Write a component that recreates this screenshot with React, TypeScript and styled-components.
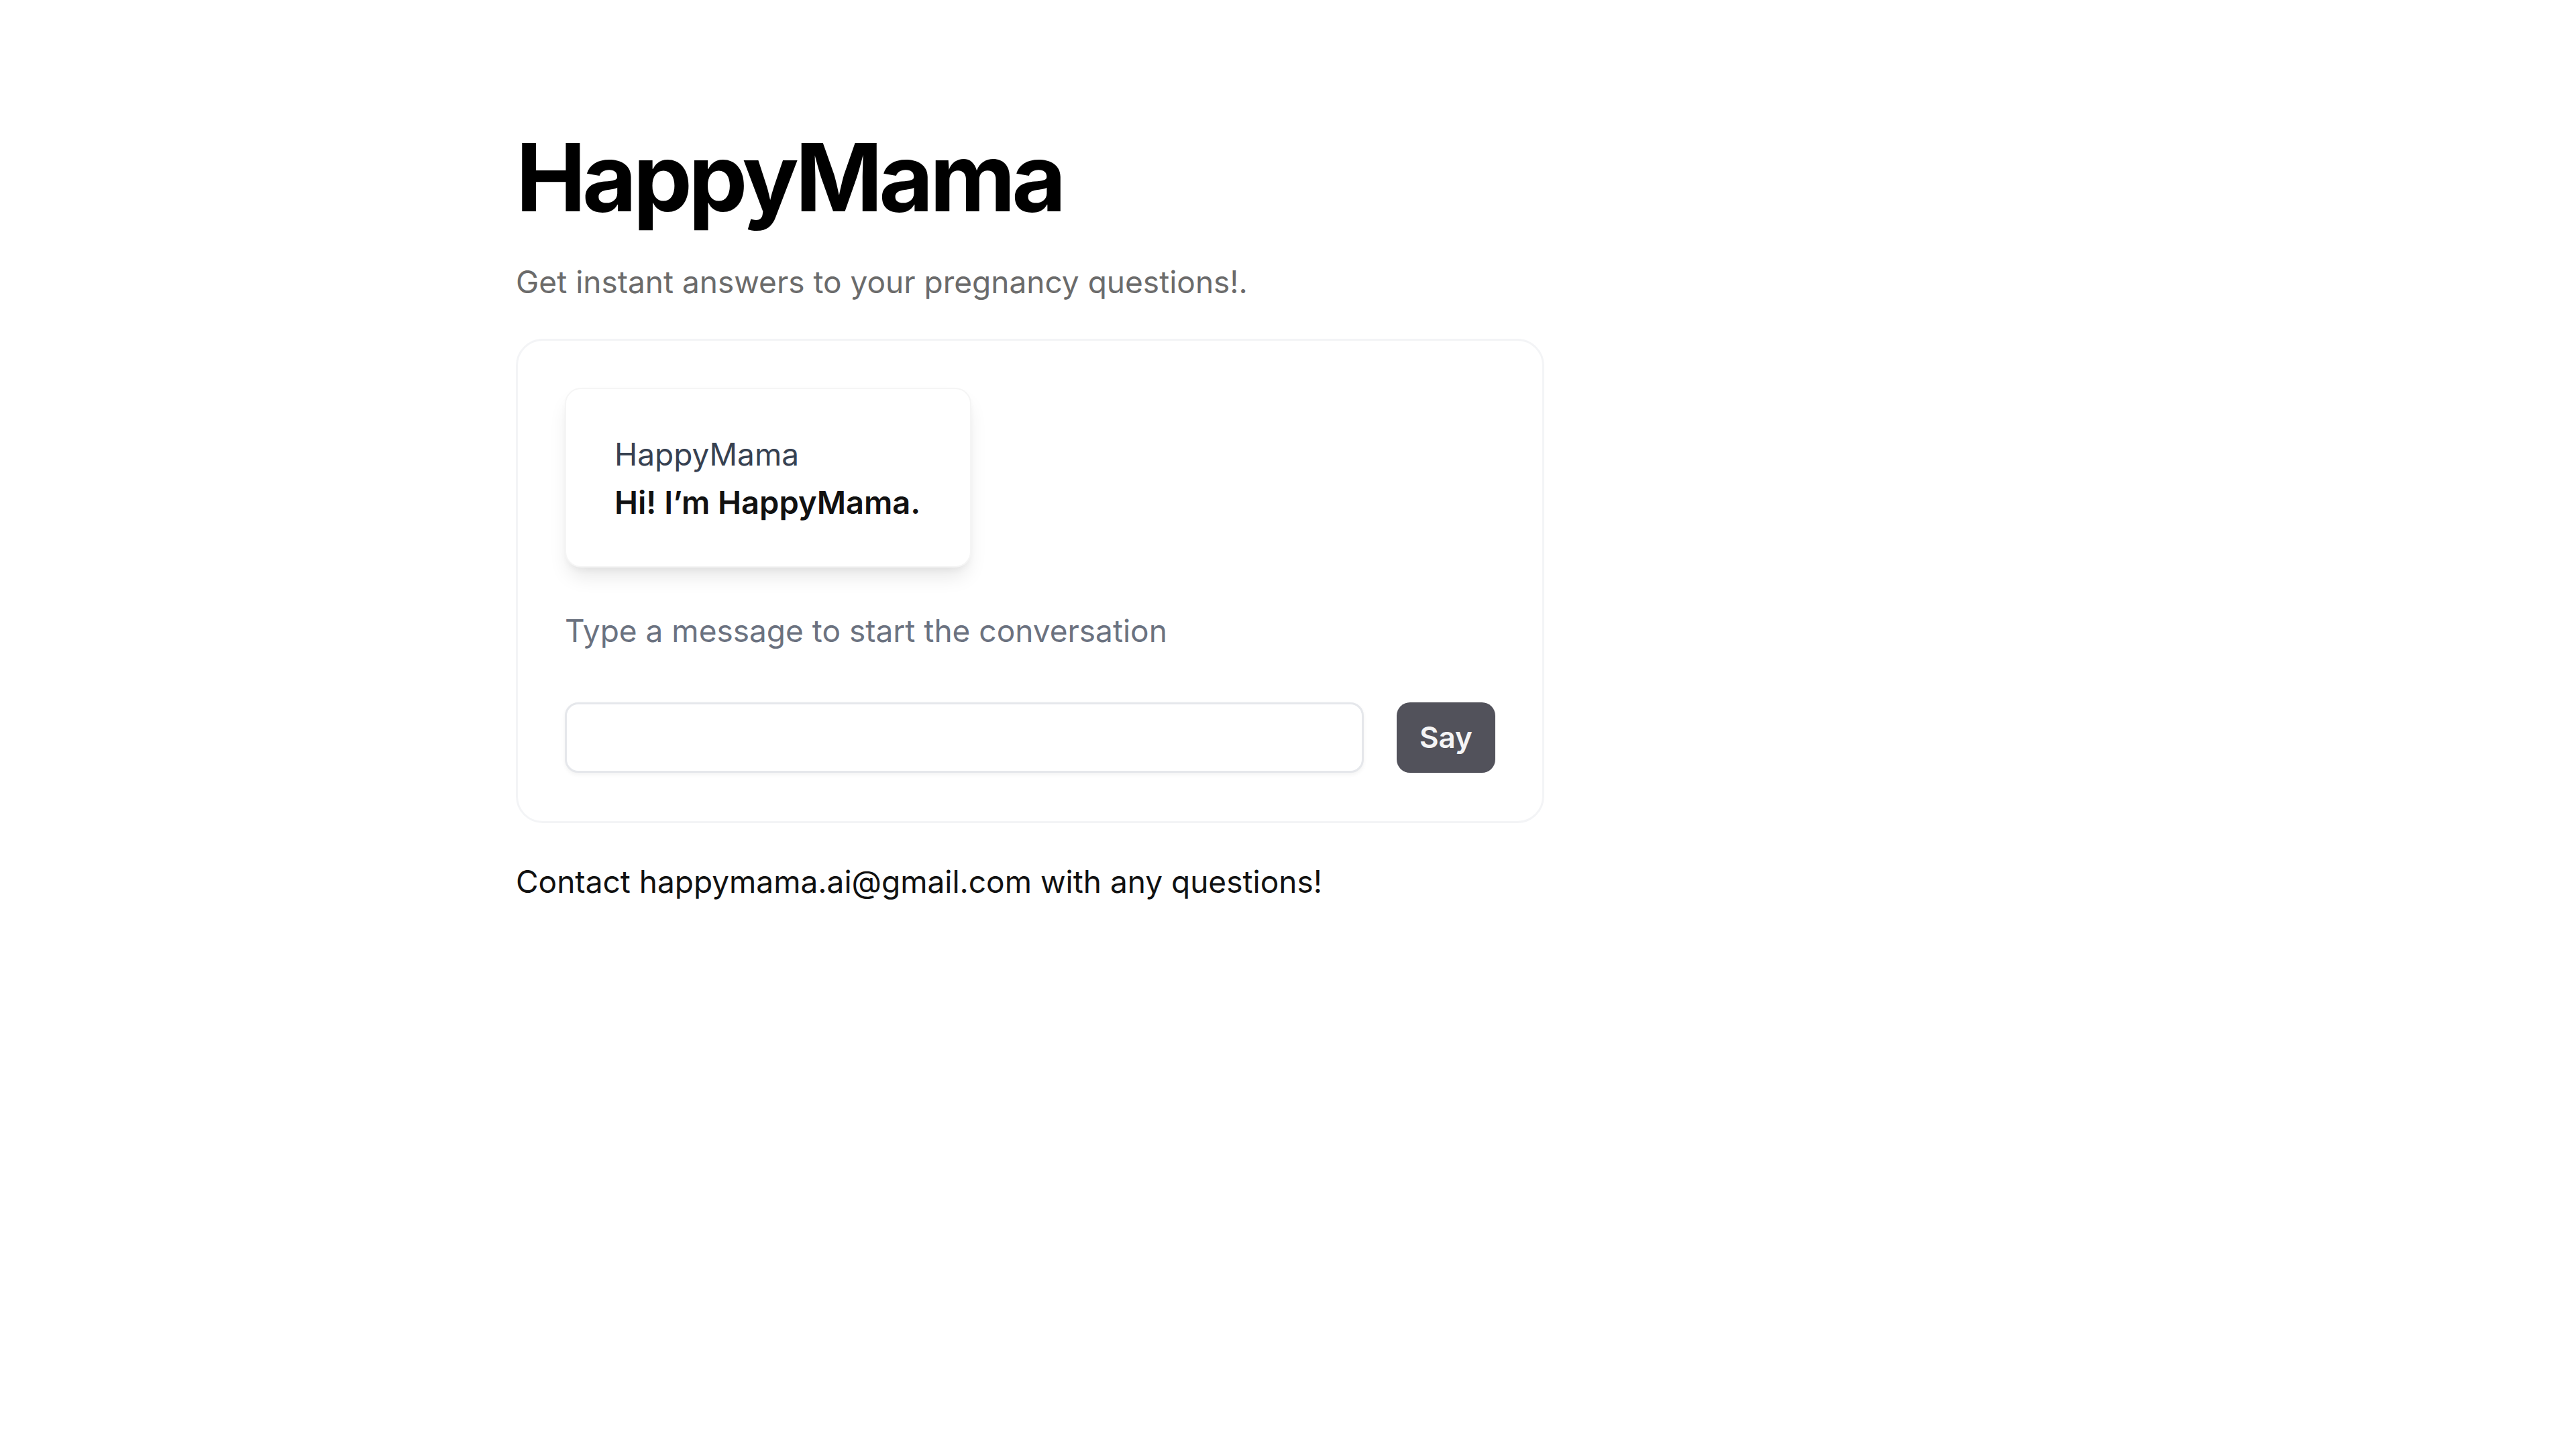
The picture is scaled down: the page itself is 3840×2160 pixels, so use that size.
import styled, { createGlobalStyle } from 'styled-components';

const GlobalStyle = createGlobalStyle`
  html, body {
    margin: 0;
    padding: 0;
    background: #ffffff;
  }
  body {
    font-family: Inter, "Noto Sans", sans-serif;
    color: #111111;
  }
`;

const Page = styled.main`
  min-height: 100vh;
  padding: 180px 0 0 769px;
  box-sizing: border-box;
`;

const Column = styled.div`
  width: 1533px;
  display: flex;
  flex-direction: column;
`;

const Title = styled.h1`
  margin: 0;
  font-size: 140px;
  line-height: 1.2;
  font-weight: 700;
  letter-spacing: -0.04em;
  color: #000000;
`;

const Subtitle = styled.p`
  margin: 40px 0 0;
  font-size: 46px;
  line-height: 1.4;
  color: #6b6b6b;
`;

const Card = styled.section`
  margin-top: 53px;
  border: 3px solid #f3f4f6;
  border-radius: 40px;
  padding: 70px 70px 72px;
  display: flex;
  flex-direction: column;
  align-items: flex-start;
`;

const Bubble = styled.div`
  padding: 62px 74px 60px 72px;
  background: #ffffff;
  border: 2px solid #f5f5f5;
  border-radius: 24px;
  box-shadow: 0 18px 30px -6px rgba(0, 0, 0, 0.1), 0 6px 12px -4px rgba(0, 0, 0, 0.06);
  display: flex;
  flex-direction: column;
`;

const Sender = styled.div`
  font-size: 46px;
  line-height: 71px;
  color: #374151;
`;

const Message = styled.div`
  font-size: 47px;
  line-height: 71px;
  font-weight: 600;
  color: #111111;
`;

const Hint = styled.p`
  margin: 62px 0 0;
  font-size: 46px;
  line-height: 1.4;
  color: #6b7280;
`;

const Form = styled.form`
  margin-top: 74px;
  width: 100%;
  display: flex;
  gap: 49px;
`;

const Input = styled.input`
  flex: 1;
  height: 105px;
  box-sizing: border-box;
  border: 3px solid #e5e7eb;
  border-radius: 20px;
  box-shadow: 0 3px 6px rgba(0, 0, 0, 0.05);
  padding: 0 28px;
  font-family: inherit;
  font-size: 44px;
  outline: none;
`;

const SayButton = styled.button`
  width: 147px;
  height: 105px;
  border: none;
  border-radius: 20px;
  background: #52525b;
  color: #f4f4f5;
  font-family: inherit;
  font-size: 44px;
  font-weight: 600;
  cursor: pointer;
`;

const Contact = styled.p`
  margin: 55px 0 0;
  font-size: 46px;
  line-height: 1.4;
  color: #111111;
`;

export default function App() {
  return (
    <>
      <GlobalStyle />
      <Page>
        <Column>
          <Title>HappyMama</Title>
          <Subtitle>Get instant answers to your pregnancy questions!.</Subtitle>
          <Card>
            <Bubble>
              <Sender>HappyMama</Sender>
              <Message>Hi! I’m HappyMama.</Message>
            </Bubble>
            <Hint>Type a message to start the conversation</Hint>
            <Form onSubmit={(e) => e.preventDefault()}>
              <Input type="text" />
              <SayButton type="submit">Say</SayButton>
            </Form>
          </Card>
          <Contact>Contact happymama.ai@gmail.com with any questions!</Contact>
        </Column>
      </Page>
    </>
  );
}
